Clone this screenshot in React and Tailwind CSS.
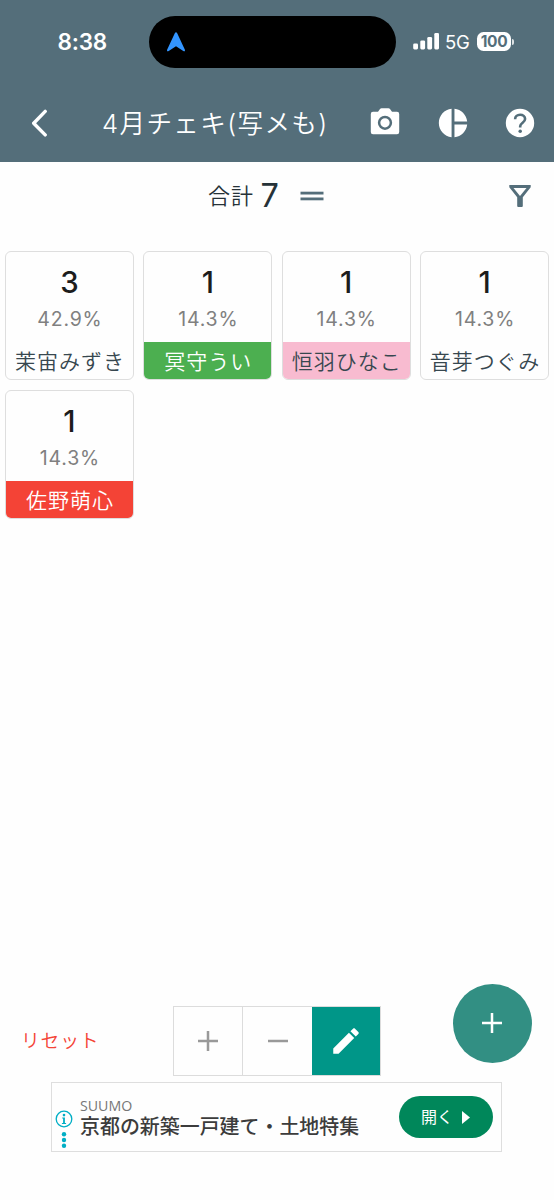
import React from "react";

const PIE =
  "M11 2v20c-5.07-.5-9-4.79-9-10s3.93-9.5 9-10zm2.03 0v8.99H22c-.47-4.74-4.24-8.52-8.97-8.99zm0 11.01V22c4.74-.47 8.5-4.25 8.97-8.99h-8.97z";
const PENCIL =
  "M3 17.25V21h3.75L17.81 9.94l-3.75-3.75L3 17.25zM20.71 7.04c.39-.39.39-1.02 0-1.41l-2.34-2.34c-.39-.39-1.02-.39-1.41 0l-1.83 1.83 3.75 3.75 1.83-1.83z";

function MaterialIcon({ d, className }) {
  return (
    <svg viewBox="0 0 24 24" fill="currentColor" className={className}>
      <path d={d} />
    </svg>
  );
}

function StatusBar() {
  return (
    <div className="flex h-[82px] items-center pt-px text-white">
      <div className="w-[149px] pl-[57.5px] text-[22.5px] leading-8 font-semibold tracking-[-0.2px]">8:38</div>
      <div className="flex h-[52px] w-[247px] items-center rounded-full bg-black pl-[17px]">
        <svg viewBox="0 0 20 20" className="h-5 w-5 text-[#3395ff]" fill="currentColor">
          <path d="M8.8 1.2Q10-.8 11.2 1.2L18.9 17.8Q19.3 20 17.3 19L10 14.2 2.7 19Q.7 20 1.1 17.8Z" />
        </svg>
      </div>
      <svg viewBox="0 0 26 17" className="ml-[17px] h-[17px] w-[26px]" fill="currentColor">
        <rect x="0.2" y="10.4" width="4.8" height="6" rx="1.3" />
        <rect x="7.3" y="7.4" width="4.8" height="9" rx="1.3" />
        <rect x="14.3" y="4" width="4.8" height="12.4" rx="1.3" />
        <rect x="21.3" y="0" width="4.7" height="16.4" rx="1.3" />
      </svg>
      <span className="ml-[6px] w-[32px] text-[18.5px] leading-6 tracking-[-0.3px] whitespace-nowrap">5G</span>
      <span className="flex h-[19px] w-[34px] items-center justify-center rounded-[6.5px] bg-white text-[15.5px] leading-none font-bold tracking-[-0.3px] text-[#546e7a]">
        100
      </span>
      <span className="ml-[1px] h-[6px] w-[2px] rounded-r-full bg-white/80" />
    </div>
  );
}

function Toolbar() {
  return (
    <div className="flex h-20 items-center text-white">
      <svg viewBox="0 0 16 28" className="mt-px ml-[31px] h-7 w-4 shrink-0" fill="none" stroke="currentColor" strokeWidth="3.4" strokeLinecap="round" strokeLinejoin="round">
        <path d="M14.2 2.4 2.7 14.2l11.5 11.7" />
      </svg>
      <h1 className="mt-[3px] ml-[55px] w-[261px] shrink-0 text-[25.6px] leading-10 font-[350] tracking-[1.35px] whitespace-nowrap">
        4月チェキ(写メも)
      </h1>
      <svg viewBox="0 0 30 28" className="ml-[7px] h-7 w-[30px] shrink-0">
        <path d="M3 3.800h5l2-2.800Q10.600.2 11.500.2h7Q19.400.2 20 1l2 2.800h5Q29.200 3.800 29.200 6V24Q29.200 26.200 27 26.200H3Q.8 26.200.8 24V6Q.8 3.800 3 3.800Z" fill="#fff" />
        <circle cx="15" cy="14.800" r="5.900" fill="none" stroke="#546e7a" strokeWidth="2.500" />
      </svg>
      <MaterialIcon d={PIE} className="mt-px ml-[35.500px] h-[34px] w-[34px] shrink-0" />
      <svg viewBox="0 0 34 34" className="mt-px ml-[33.500px] h-[34px] w-[34px] shrink-0" fill="none">
        <circle cx="17" cy="17" r="14.200" fill="#fff" />
        <path d="M12.100 13.200C12.100 10.500 14.200 8.800 17.100 8.800C20 8.800 22.100 10.500 22.100 13.100C22.100 16.600 17.200 16.800 17.200 20.300V21.500" stroke="#546e7a" strokeWidth="2.600" />
        <circle cx="17.200" cy="25.200" r="1.750" fill="#546e7a" />
      </svg>
    </div>
  );
}

function Summary() {
  return (
    <div className="flex h-[68px] items-center text-[#263238]">
      <span className="ml-[208px] w-[52.500px] pt-px text-[22px] font-[350] tracking-[1px] whitespace-nowrap">合計</span>
      <span className="w-[39.500px] font-['Inter'] text-[32.500px] leading-none font-normal">7</span>
      <svg viewBox="0 0 24 10" className="h-[10px] w-6" fill="#546e7a">
        <rect x="0.500" y="0.700" width="23" height="2.800" />
        <rect x="0.500" y="6.500" width="23" height="2.800" />
      </svg>
      <svg viewBox="0 0 24 24" className="mr-[22px] ml-auto h-6 w-6" fill="#546e7a" fillRule="evenodd">
        <path d="M1.300 1H22.700V3.300L14.800 13.200V22Q14.800 23 13.800 23H10.200Q9.200 23 9.200 22V13.200L1.300 3.300ZM5.500 3.900 12 12 18.500 3.900Z" />
      </svg>
    </div>
  );
}

const MEMBERS = [
  { count: 3, share: "42.9%", name: "茉宙みずき", tone: "text-[#37474f]" },
  { count: 1, share: "14.3%", name: "冥守うい", tone: "bg-[#4caf50] text-white" },
  { count: 1, share: "14.3%", name: "恒羽ひなこ", tone: "bg-[#f8bbd0] text-[#37474f]" },
  { count: 1, share: "14.3%", name: "音芽つぐみ", tone: "text-[#37474f]" },
  { count: 1, share: "14.3%", name: "佐野萌心", tone: "bg-[#f44336] text-white" },
];

function MemberCard({ count, share, name, tone }) {
  return (
    <div className="flex h-[129px] flex-col overflow-hidden rounded-[6px] border border-[#dedede] text-center">
      <div className="mt-[12px] h-9 font-['Inter'] text-[29.500px] leading-9 font-medium text-[#1c1c1c]">{count}</div>
      <div className="mt-[6px] h-[26px] pl-px font-['Inter'] text-[19.500px] leading-[26px] font-normal tracking-[0.800px] text-[#808080]">{share}</div>
      <div className={"mt-auto h-[37px] pt-px pl-px text-[21px] leading-[37px] font-[350] tracking-[1px] whitespace-nowrap " + tone}>{name}</div>
    </div>
  );
}

function Controls() {
  return (
    <div className="flex h-[98px] items-start">
      <button className="mt-[44px] ml-[21px] w-[152px] text-left text-[18.800px] leading-7 font-[350] tracking-[0.800px] text-[#f44336]">
        リセット
      </button>
      <div className="mt-[22px] flex h-[70px] w-[208px] border border-[#dcdcdc]">
        <div className="flex w-[69px] items-center justify-center border-r border-[#dcdcdc]">
          <svg viewBox="0 0 20 20" className="h-5 w-5" stroke="#999" strokeWidth="2.500">
            <path d="M10 0V20M0 10H20" />
          </svg>
        </div>
        <div className="flex w-[69px] items-center justify-center">
          <svg viewBox="0 0 20 20" className="h-5 w-5" stroke="#999" strokeWidth="2.500">
            <path d="M0 10H20" />
          </svg>
        </div>
        <div className="flex flex-1 items-center justify-center bg-[#009688] text-white">
          <MaterialIcon d={PENCIL} className="h-[34px] w-[34px]" />
        </div>
      </div>
      <button className="-mt-[0.500px] ml-[71.500px] flex h-[79px] w-[79px] items-center justify-center rounded-full bg-[#328f83]">
        <svg viewBox="0 0 20 20" className="h-5 w-5" stroke="#fff" strokeWidth="2.500">
          <path d="M10 0V20M0 10H20" />
        </svg>
      </button>
    </div>
  );
}

function AdBanner() {
  return (
    <div className="mr-auto ml-[51px] flex h-[70px] w-[451px] items-center border border-[#dedede]">
      <svg viewBox="0 0 18 40" className="mt-[25px] ml-[2.500px] h-10 w-[18px] shrink-0 text-[#00aec5]" fill="currentColor">
        <circle cx="9" cy="9" r="7.800" fill="none" stroke="currentColor" strokeWidth="1.300" />
        <circle cx="9" cy="5.100" r="1.300" />
        <path d="M7.200 7.600h2.700v5.300h1.200v1H6.900v-1h1.200V8.600h-.9z" />
        <circle cx="9" cy="24.300" r="2.200" />
        <circle cx="9" cy="30" r="2.200" />
        <circle cx="9" cy="35.700" r="2.200" />
      </svg>
      <div className="ml-[7.500px] w-[319px]">
        <div className="mt-[2px] font-['Open_Sans'] text-[14.200px] leading-[17px] text-[#777]">SUUMO</div>
        <div className="text-[19.950px] leading-[26px] font-medium whitespace-nowrap text-[#3c3c3c]">京都の新築一戸建て・土地特集</div>
      </div>
      <button className="flex h-[42px] w-[94px] items-center rounded-full bg-[#00875a] pl-[22px] text-[16px] text-white">
        開く
        <svg viewBox="0 0 8 14" className="ml-[9px] h-[13px] w-2" fill="currentColor" preserveAspectRatio="none">
          <path d="M0 0 8 7 0 14Z" />
        </svg>
      </button>
    </div>
  );
}

export default function App() {
  return (
    <div className="flex h-[1200px] w-[554px] flex-col overflow-hidden bg-[#fefefe] font-['Inter','Noto_Sans_CJK_JP',sans-serif]">
      <header className="h-[162px] shrink-0 bg-[#546e7a]">
        <StatusBar />
        <Toolbar />
      </header>
      <Summary />
      <main className="mt-[21px] grid grid-cols-4 gap-x-[9.500px] gap-y-[9.500px] px-[5px]">
        {MEMBERS.map((m) => (
          <MemberCard key={m.name} {...m} />
        ))}
      </main>
      <footer className="mt-auto pb-[48px]">
        <Controls />
        <AdBanner />
      </footer>
    </div>
  );
}
